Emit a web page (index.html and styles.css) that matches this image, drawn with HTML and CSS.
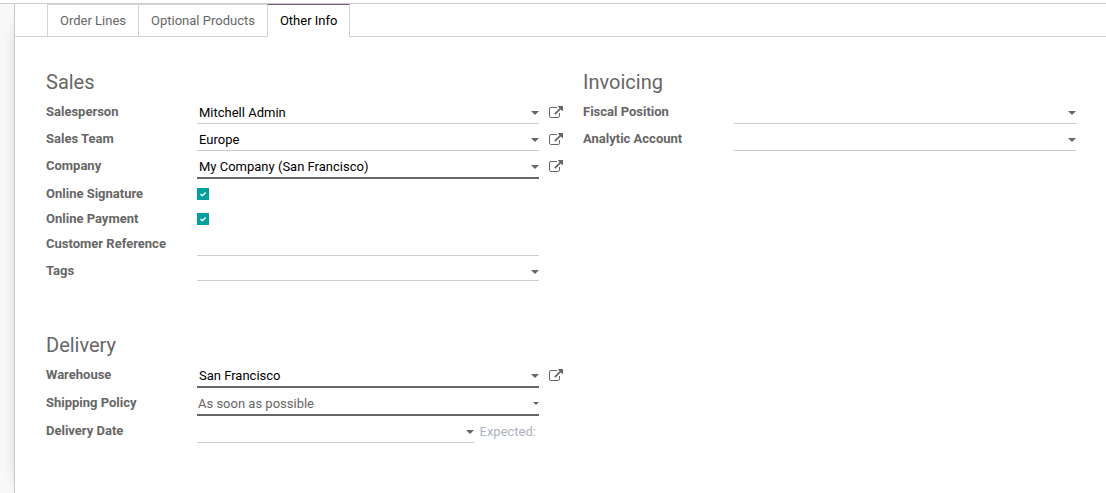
FILE: index.html
```html
<!DOCTYPE html>
<html lang="en">
<head>
    <meta charset="UTF-8">
    <meta name="viewport" content="width=device-width, initial-scale=1.0">
    <title>Sales Order</title>
    <link rel="stylesheet" href="styles.css">
</head>
<body>
    <svg class="symbols" aria-hidden="true">
        <symbol id="external-link" viewBox="0 0 1792 1792">
            <path d="M1408 928v320q0 119-84.5 203.5t-203.5 84.5h-832q-119 0-203.5-84.5t-84.5-203.5v-832q0-119 84.5-203.5t203.5-84.5h704q14 0 23 9t9 23v64q0 14-9 23t-23 9h-704q-66 0-113 47t-47 113v832q0 66 47 113t113 47h832q66 0 113-47t47-113v-320q0-14 9-23t23-9h64q14 0 23 9t9 23zm384-864v512q0 26-19 45t-45 19-45-19l-176-176-652 652q-10 10-23 10t-23-10l-114-114q-10-10-10-23t10-23l652-652-176-176q-19-19-19-45t19-45 45-19h512q26 0 45 19t19 45z"/>
        </symbol>
    </svg>
    <div class="content">
        <main class="sheet">
            <nav class="tabs" role="tablist">
                <button class="tab" type="button" role="tab">Order Lines</button>
                <button class="tab" type="button" role="tab">Optional Products</button>
                <button class="tab active" type="button" role="tab" aria-selected="true">Other Info</button>
            </nav>
            <form class="groups">
                <section class="group">
                    <h2>Sales</h2>
                    <div class="row">
                        <label for="salesperson">Salesperson</label>
                        <div class="field dropdown">
                            <select id="salesperson"><option>Mitchell Admin</option></select>
                        </div>
                        <button class="external" type="button" aria-label="External link"><svg><use href="#external-link"/></svg></button>
                    </div>
                    <div class="row">
                        <label for="team">Sales Team</label>
                        <div class="field dropdown">
                            <select id="team"><option>Europe</option></select>
                        </div>
                        <button class="external" type="button" aria-label="External link"><svg><use href="#external-link"/></svg></button>
                    </div>
                    <div class="row">
                        <label for="company">Company</label>
                        <div class="field dropdown required">
                            <select id="company"><option>My Company (San Francisco)</option></select>
                        </div>
                        <button class="external" type="button" aria-label="External link"><svg><use href="#external-link"/></svg></button>
                    </div>
                    <div class="row">
                        <label for="signature">Online Signature</label>
                        <span class="check">
                            <input type="checkbox" id="signature" checked>
                            <svg viewBox="0 0 12 12"><path d="M3.5 6l1.8 1.8L8.7 4.4"/></svg>
                        </span>
                    </div>
                    <div class="row">
                        <label for="payment">Online Payment</label>
                        <span class="check">
                            <input type="checkbox" id="payment" checked>
                            <svg viewBox="0 0 12 12"><path d="M3.5 6l1.8 1.8L8.7 4.4"/></svg>
                        </span>
                    </div>
                    <div class="row">
                        <label for="reference">Customer Reference</label>
                        <div class="field"><input type="text" id="reference"></div>
                    </div>
                    <div class="row">
                        <label for="tags">Tags</label>
                        <div class="field dropdown tags">
                            <select id="tags"><option></option></select>
                        </div>
                    </div>
                </section>
                <section class="group">
                    <h2>Invoicing</h2>
                    <div class="row">
                        <label for="fiscal">Fiscal Position</label>
                        <div class="field dropdown">
                            <select id="fiscal"><option></option></select>
                        </div>
                    </div>
                    <div class="row">
                        <label for="analytic">Analytic Account</label>
                        <div class="field dropdown">
                            <select id="analytic"><option></option></select>
                        </div>
                    </div>
                </section>
                <section class="group">
                    <h2>Delivery</h2>
                    <div class="row">
                        <label for="warehouse">Warehouse</label>
                        <div class="field dropdown required">
                            <select id="warehouse"><option>San Francisco</option></select>
                        </div>
                        <button class="external" type="button" aria-label="External link"><svg><use href="#external-link"/></svg></button>
                    </div>
                    <div class="row">
                        <label for="policy">Shipping Policy</label>
                        <div class="field dropdown required selection">
                            <select id="policy">
                                <option>As soon as possible</option>
                            </select>
                        </div>
                    </div>
                    <div class="row">
                        <label for="date">Delivery Date</label>
                        <div class="date">
                            <div class="field dropdown"><input type="text" id="date"></div>
                            <span class="muted">Expected:</span>
                        </div>
                    </div>
                </section>
            </form>
        </main>
    </div>
</body>
</html>
```
FILE: styles.css
```css
* {
    box-sizing: border-box;
}
body {
    margin: 0;
    font-family: Roboto, "Noto Sans", sans-serif;
    font-size: 13px;
    line-height: 20px;
    color: #666666;
    background-color: white;
}
button, input, select {
    font: inherit;
    color: inherit;
    margin: 0;
    padding: 0;
    border: none;
    border-radius: 0;
    background: none;
}
.symbols {
    display: none;
}
.content {
    display: flex;
    margin-top: 3px;
    min-height: calc(100vh - 3px);
    padding-left: 14px;
    border-top: 1px solid #cccccc;
    background-color: #f9f9f9;
    overflow: hidden;
}
.sheet {
    flex: 1;
    background-color: white;
    border-left: 1px solid #c8c8d3;
    box-shadow: 0 5px 20px -15px black;
}

/* Tabs */
.tabs {
    display: flex;
    padding-left: 32px;
    border-bottom: 1px solid #ced4da;
}
.tab {
    height: 32px;
    padding: 0 12px;
    border: 1px solid #ced4da;
    border-bottom: none;
    margin-right: -1px;
}
.tab.active {
    height: 33px;
    margin-bottom: -1px;
    color: black;
    border-top-color: #7c5576;
    background-color: white;
}

/* Groups */
.groups {
    display: grid;
    grid-template-columns: 1fr 1fr;
    gap: 49px 20px;
    padding: 32px 6px 48px 31px;
}
.group h2 {
    margin: 0;
    padding-bottom: 4px;
    font-size: 20px;
    line-height: 26px;
    font-weight: 400;
}
.row {
    display: grid;
    grid-template-columns: 151px 1fr 24px;
    padding: 3px 0 2px;
}
.row label {
    font-weight: 700;
}

/* Fields */
.field {
    position: relative;
    border-bottom: 1px solid #cccccc;
}
.field input, .field select {
    display: block;
    width: 100%;
    height: 21px;
    padding: 1px 0 0 2px;
    color: black;
    appearance: none;
    outline: none;
}
.dropdown::after {
    content: "";
    position: absolute;
    top: 9px;
    right: 0;
    border: 4px solid transparent;
    border-top-color: #666666;
    border-bottom: none;
    pointer-events: none;
}
.required {
    border-bottom: 2px solid #666666;
}
.tags select {
    height: 19px;
}
.selection select {
    padding-left: 1px;
    color: #666666;
}
.selection::after {
    border-width: 3px 3px 0;
}
.date {
    display: flex;
}
.date .field {
    flex: 1;
}
.muted {
    padding: 1px 3px 0 6px;
    color: #adb5bd;
}

/* Checkboxes */
.check {
    display: grid;
    align-items: center;
    justify-items: start;
}
.check input, .check svg {
    grid-area: 1 / 1;
    width: 12px;
    height: 12px;
}
.check input {
    appearance: none;
    border: 1px solid #666666;
}
.check input:checked {
    border-color: #00a09d;
    background-color: #00a09d;
}
.check svg {
    fill: none;
    stroke: white;
    stroke-width: 1.4;
    pointer-events: none;
}
.check input:not(:checked) + svg {
    visibility: hidden;
}

/* Open record button */
.external {
    display: flex;
    align-items: center;
    justify-content: flex-end;
    height: 22px;
}
.external svg {
    width: 14px;
    height: 14px;
    fill: #666666;
}
```
